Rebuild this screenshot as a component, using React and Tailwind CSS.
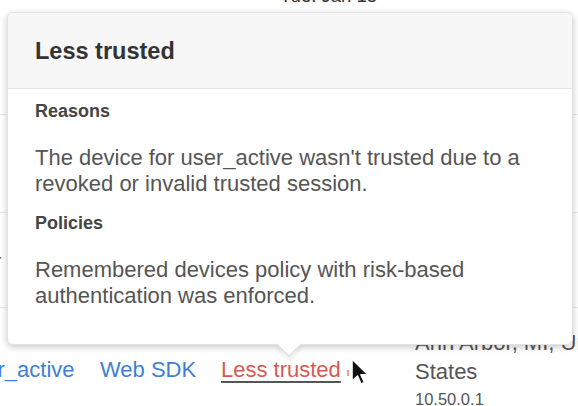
function Cursor() {
  return (
    <svg
      className="absolute left-[350px] top-[357px]"
      width="20"
      height="30"
      viewBox="0 0 20 30"
    >
      <path
        d="M2 2 L2 24 L7.5 19 L11 27 L14.5 25.5 L11 17.8 L18 17.8 Z"
        fill="#111"
        stroke="#fff"
        strokeWidth="1.6"
        strokeLinejoin="round"
      />
    </svg>
  );
}

function TrustPopover() {
  return (
    <div className="absolute left-[7px] top-[12px] w-[566px] h-[333px] bg-white rounded-[6px] border border-[#e2e2e2] shadow-[0_2px_7px_rgba(0,0,0,0.22)]">
      <div className="h-[76px] flex items-center px-[27px] bg-[#f7f7f7] rounded-t-[6px] border-b border-[#e3e3e3]">
        <h2 className="mt-[2px] text-[23.5px] font-bold text-[#333]">Less trusted</h2>
      </div>
      <div className="px-[27px] pt-[14px] text-[#555]">
        <h3 className="text-[18px] leading-[16px] font-bold text-[#444]">
          Reasons
        </h3>
        <p className="mt-[26px] text-[22px] leading-[26px]">
          The device for user_active wasn't trusted due to a revoked or invalid
          trusted session.
        </p>
        <h3 className="mt-[18px] text-[18px] leading-[16px] font-bold text-[#444]">
          Policies
        </h3>
        <p className="mt-[26px] w-[460px] text-[22px] leading-[26px]">
          Remembered devices policy with risk-based authentication was
          enforced.
        </p>
      </div>
      <div className="absolute left-[272px] bottom-[-9px] w-[18px] h-[18px] rotate-45 bg-white border-r border-b border-[#dedede] shadow-[3px_3px_4px_rgba(0,0,0,0.08)]" />
    </div>
  );
}

export default function App() {
  return (
    <div
      className="relative w-[578px] h-[406px] overflow-hidden bg-white text-[#555]"
      style={{ fontFamily: '"Liberation Sans", Arial, sans-serif' }}
    >
      <div className="flex flex-col">
        <div className="h-[115px] border-b border-[#e6e6e6]">
          <div className="-mt-[15px] pl-[280px] text-[18.5px] leading-[22px] text-[#333]">
            Tue. Jan 18
          </div>
        </div>
        <div className="h-[98px] border-b border-[#e6e6e6]" />
        <div className="h-[95px] flex items-center border-b border-[#e6e6e6]">
          <span className="-ml-[6px] pt-[2px] text-[22px] text-[#555]">r</span>
        </div>
        <div className="flex items-start text-[22px] leading-[26px]">
          <div className="w-[100px] pt-[49px] -ml-[38px] shrink-0">
            <span className="text-[#3f7fd6]">user_active</span>
          </div>
          <div className="w-[121px] pt-[49px] ml-[38px] shrink-0">
            <span className="text-[#3f7fd6]">Web SDK</span>
          </div>
          <div className="w-[194px] pt-[49px] shrink-0 flex items-center">
            <span className="text-[#d85a50] underline decoration-[#555] decoration-2 underline-offset-[4px]">
              Less trusted
            </span>
            <span className="ml-[6px] mt-[6px] w-[2px] h-[6px] bg-[#e2a49f]" />
          </div>
          <div className="pt-[22px] shrink-0 text-[#555]">
            <div className="whitespace-nowrap">Ann Arbor, MI, United</div>
            <div className="mt-[3px]">States</div>
            <div className="mt-[5px] text-[16.5px] leading-[18px]">10.50.0.1</div>
          </div>
        </div>
      </div>
      <TrustPopover />
      <Cursor />
    </div>
  );
}
